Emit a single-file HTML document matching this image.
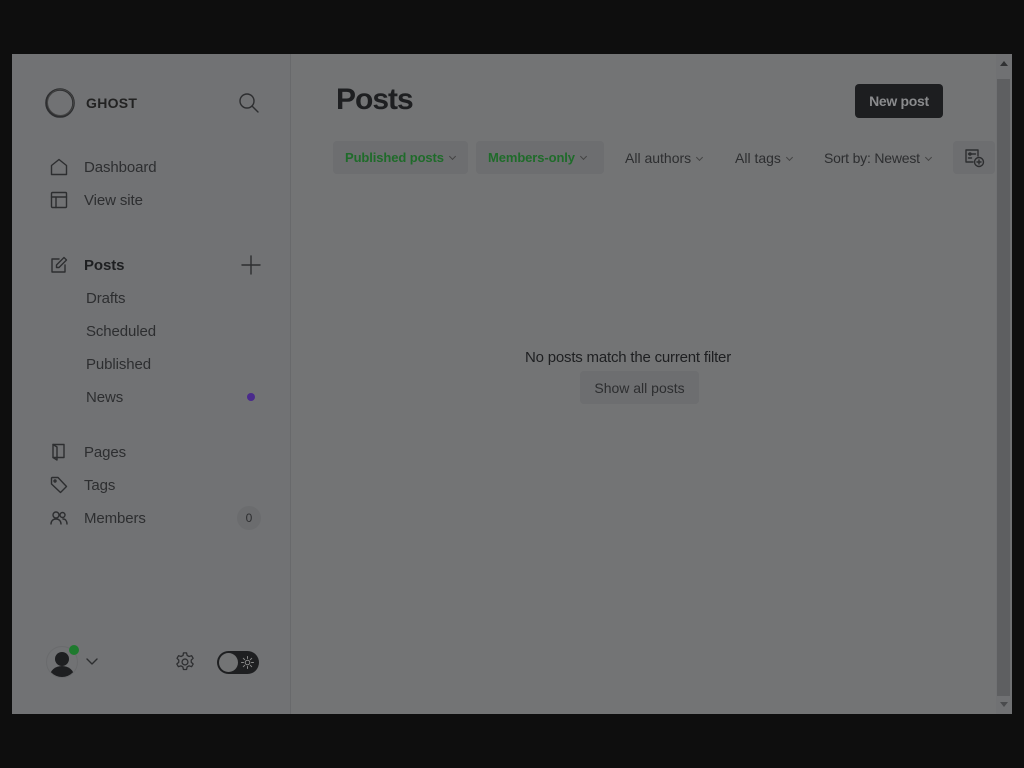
<!DOCTYPE html>
<html><head><meta charset="utf-8"><style>
*{box-sizing:border-box;margin:0;padding:0}
body{width:1024px;height:768px;background:#0e0e0e;font-family:"Liberation Sans",sans-serif;position:relative;overflow:hidden;color:#2a2b2d}
.win{position:absolute;left:12px;top:54px;width:1000px;height:660px;background:#737475;overflow:hidden}
.side{position:absolute;left:0;top:0;width:279px;height:660px;background:#717274;border-right:1px solid #68696b}
.a{position:absolute;white-space:nowrap}
.nav{font-size:15px;color:#2d2e30;letter-spacing:-.1px}
svg{position:absolute;fill:none;stroke:#2d2e30;stroke-width:1.4;stroke-linecap:round;stroke-linejoin:round}
.chip{position:absolute;top:87px;height:33px;border-radius:4px;font-size:14px;line-height:34px;padding-left:12px}
.g{background:#6d6e70;color:#1f6b2a;font-weight:bold;font-size:13px;letter-spacing:-.1px}
.cv{display:inline-block;width:5px;height:5px;border-right:1px solid #444;border-bottom:1px solid #444;transform:rotate(45deg);margin-left:6px;position:relative;top:-3px}
</style></head><body>
<div class="win">
<div class="side">
 <svg style="left:32px;top:33px" width="32" height="32" viewBox="0 0 32 32"><circle cx="16" cy="16" r="13.5" stroke="#2d2e30" stroke-width="2.6"/><circle cx="16.5" cy="15.5" r="13" stroke="#444" stroke-width="1"/></svg>
 <div class="a" style="left:74px;top:41px;font-size:14px;font-weight:bold;color:#222;letter-spacing:.3px">GHOST</div>
 <svg style="left:226px;top:38px" width="22" height="22" viewBox="0 0 22 22"><circle cx="9" cy="9" r="7"/><path d="M14 14l6 6"/></svg>
 <svg style="left:38px;top:104px" width="18" height="18" viewBox="0 0 18 18"><path d="M1.5 7.5L9 1.5l7.5 6V16.5h-15z"/></svg>
 <div class="a nav" style="left:72px;top:105px">Dashboard</div>
 <svg style="left:38px;top:137px" width="18" height="18" viewBox="0 0 18 18"><rect x="1.5" y="1.5" width="15" height="15" rx="1"/><path d="M1.5 6h15M6 6v10.5"/></svg>
 <div class="a nav" style="left:72px;top:138px">View site</div>
 <svg style="left:38px;top:202px" width="18" height="18" viewBox="0 0 18 18"><path d="M9 3H2v13h13V9"/><path d="M14 1.5l2.5 2.5L9 11.5H6.5V9z"/></svg>
 <div class="a nav" style="left:72px;top:203px;font-weight:bold;color:#1e1f21">Posts</div>
 <svg style="left:229px;top:201px" width="20" height="20" viewBox="0 0 20 20"><path d="M10 1v18M1 10h18"/></svg>
 <div class="a nav" style="left:74px;top:236px">Drafts</div>
 <div class="a nav" style="left:74px;top:269px">Scheduled</div>
 <div class="a nav" style="left:74px;top:302px">Published</div>
 <div class="a nav" style="left:74px;top:335px">News</div>
 <div class="a" style="left:235px;top:339px;width:8px;height:8px;border-radius:50%;background:#4a2a8c"></div>
 <svg style="left:38px;top:389px" width="18" height="18" viewBox="0 0 18 18"><path d="M3 1.5h11v13H3z"/><path d="M3 1.5l4 2.5v13l-4-2.5"/></svg>
 <div class="a nav" style="left:72px;top:390px">Pages</div>
 <svg style="left:38px;top:422px" width="18" height="18" viewBox="0 0 18 18"><path d="M1.5 2v6l9 8.5 6-6L8 1.5H2z"/><circle cx="5" cy="5" r="1"/></svg>
 <div class="a nav" style="left:72px;top:423px">Tags</div>
 <svg style="left:38px;top:455px" width="18" height="18" viewBox="0 0 18 18"><circle cx="6" cy="6" r="3"/><path d="M1 15c0-3 2-5 5-5s5 2 5 5"/><circle cx="12.5" cy="6" r="2.5"/><path d="M13 10c2.5 0 4 2 4 5"/></svg>
 <div class="a nav" style="left:72px;top:456px">Members</div>
 <div class="a" style="left:225px;top:452px;width:24px;height:24px;border-radius:50%;background:#6b6c6e;font-size:12px;line-height:24px;text-align:center;color:#2d2e30">0</div>
 <div class="a" style="left:34px;top:592px;width:32px;height:32px;border-radius:50%;background:#717274;overflow:hidden;border:1px solid #6a6b6d">
  <div class="a" style="left:8px;top:5px;width:14px;height:14px;border-radius:50%;background:#1e1f21"></div>
  <div class="a" style="left:3px;top:19px;width:24px;height:20px;border-radius:50%;background:#1e1f21"></div>
 </div>
 <div class="a" style="left:57px;top:591px;width:10px;height:10px;border-radius:50%;background:#1e7a2e"></div>
 <svg style="left:74px;top:604px" width="12" height="8" viewBox="0 0 12 8"><path d="M1 1l5 5 5-5"/></svg>
 <svg style="left:162px;top:597px" width="22" height="22" viewBox="0 0 24 24"><circle cx="12" cy="12" r="3.2"/><path d="M10.3 2h3.4l.6 2.8 2.2 1.2 2.7-.9 1.7 2.9-2.1 1.9v2.4l2.1 1.9-1.7 2.9-2.7-.9-2.2 1.2-.6 2.8h-3.4l-.6-2.8-2.2-1.2-2.7.9-1.7-2.9 2.1-1.9v-2.4L3.3 8l1.7-2.9 2.7.9 2.2-1.2z"/></svg>
 <div class="a" style="left:205px;top:597px;width:42px;height:23px;border-radius:12px;background:#1e1f21"></div>
 <div class="a" style="left:207px;top:599px;width:19px;height:19px;border-radius:50%;background:#737475"></div>
 <svg style="left:229px;top:602px;stroke:#888;stroke-width:1" width="13" height="13" viewBox="0 0 13 13"><circle cx="6.5" cy="6.5" r="2.3"/><path d="M6.5 .5v2M6.5 10.5v2M.5 6.5h2M10.5 6.5h2M2.3 2.3l1.4 1.4M9.3 9.3l1.4 1.4M2.3 10.7l1.4-1.4M9.3 3.7l1.4-1.4"/></svg>
</div>
<div class="a" style="left:324px;top:29px;font-size:30px;font-weight:bold;color:#1e1f21;letter-spacing:-1px">Posts</div>
<div class="a" style="left:843px;top:30px;width:88px;height:34px;border-radius:4px;background:#1d1e20;color:#8a8b8d;font-size:14px;font-weight:bold;line-height:34px;text-align:center;letter-spacing:-.3px">New post</div>
<div class="chip g" style="left:321px;width:135px">Published posts<span class="cv"></span></div>
<div class="chip g" style="left:464px;width:128px">Members-only<span class="cv"></span></div>
<div class="chip" style="left:601px;color:#2d2e30">All authors<span class="cv"></span></div>
<div class="chip" style="left:711px;color:#2d2e30">All tags<span class="cv"></span></div>
<div class="chip" style="left:800px;color:#2d2e30;letter-spacing:-.2px">Sort by: Newest<span class="cv"></span></div>
<div class="a" style="left:941px;top:87px;width:42px;height:33px;border-radius:4px;background:#6d6e70"></div>
<svg style="left:952px;top:94px" width="21" height="20" viewBox="0 0 21 20"><path d="M9 14H2V2h12v6"/><path d="M4.5 6h7M4.5 10h3"/><circle cx="6" cy="6" r="1"/><circle cx="15" cy="14" r="4.5"/><path d="M15 12v4M13 14h4"/></svg>
<div class="a" style="left:513px;top:295px;font-size:15px;color:#1e1f21;letter-spacing:-.2px">No posts match the current filter</div>
<div class="a" style="left:568px;top:317px;width:119px;height:33px;border-radius:4px;background:#6d6e70;font-size:14px;line-height:34px;text-align:center;color:#2d2e30">Show all posts</div>
<div class="a" style="left:984px;top:0;width:16px;height:660px;background:#707173"></div>
<div class="a" style="left:985px;top:25px;width:13px;height:617px;background:#5e5f61"></div>
<div class="a" style="left:988px;top:7px;width:0;height:0;border-left:4px solid transparent;border-right:4px solid transparent;border-bottom:5px solid #303133"></div>
<div class="a" style="left:988px;top:648px;width:0;height:0;border-left:4px solid transparent;border-right:4px solid transparent;border-top:5px solid #4a4b4d"></div>
</div>
</body></html>
